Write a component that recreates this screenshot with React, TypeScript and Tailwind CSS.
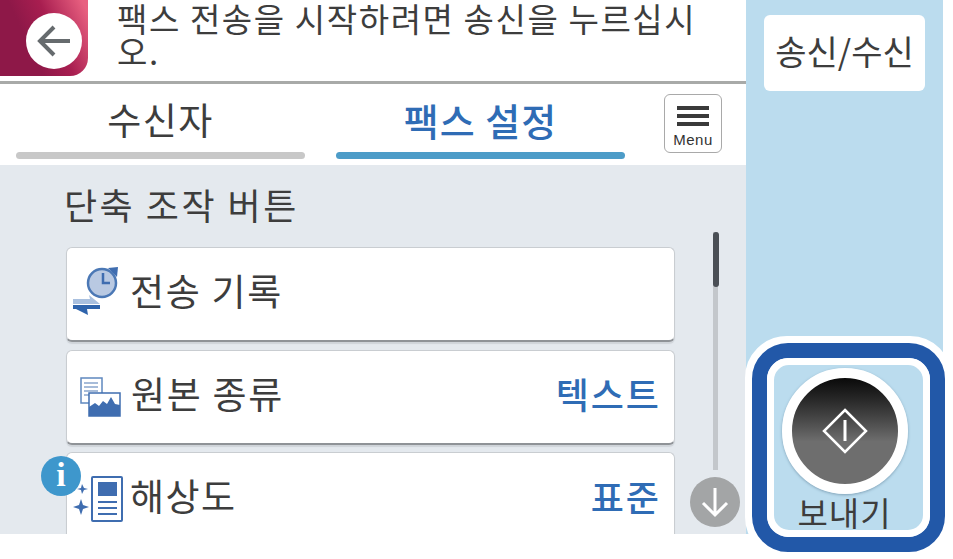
import React from 'react';

const font = { fontFamily: '"Noto Sans CJK KR", "Noto Sans", sans-serif' };

const HistoryIcon = () => (
  <svg width="46" height="50" viewBox="0 0 46 50">
    <circle cx="29" cy="16" r="14" fill="#b9c9e2" stroke="#4b78b5" strokeWidth="2.5" />
    <path d="M30 6v10h7" fill="none" stroke="#3f6db0" strokeWidth="2.5" />
    <path d="M35 1l10-1-1 10z" fill="#3f6db0" />
    <path d="M0 32h17l-1-4 11 9H0z" fill="#a9c0df" />
    <path d="M0 38h27v4H14l1 6-12-6H0z" fill="#2f64ac" />
  </svg>
);

const OriginalIcon = () => (
  <svg width="41" height="40" viewBox="0 0 41 40">
    <rect x="1" y="1" width="21" height="25" fill="#fff" stroke="#5f88bf" strokeWidth="1.5" />
    <path d="M4 6h14M4 10h14M4 14h14M4 18h6" stroke="#8aa6cd" strokeWidth="1.5" />
    <rect x="9" y="16" width="31" height="23" fill="#fff" stroke="#3f6db0" strokeWidth="1.5" />
    <path d="M9 39V30l6-4 4 3 4-5 4 3 4-7 4 7 5 1v11z" fill="#3f6db0" />
  </svg>
);

const ResolutionIcon = () => (
  <svg width="50" height="46" viewBox="0 0 50 46">
    <path d="M8 23l2 6 6 2-6 2-2 6-2-6-6-2 6-2z" fill="#3f6db0" />
    <path d="M9 8l2 4 4 1-4 1-2 4-1-4-4-1 4-1z" fill="#3f6db0" />
    <rect x="19" y="1" width="30" height="44" rx="1" fill="#fff" stroke="#3f6db0" strokeWidth="2" />
    <rect x="25" y="6" width="19" height="14" fill="#3f6db0" />
    <path d="M25 26h19M25 32h19M25 38h19" stroke="#3f6db0" strokeWidth="2" />
  </svg>
);

const Row = ({ icon, label, value, iconClass, track }: { icon: React.ReactNode; label: string; value?: string; iconClass: string; track: string }) => (
  <div className="flex h-[95px] shrink-0 items-center rounded-md border border-b-2 border-[#c9cdd1] border-b-[#8f9397] bg-white pb-[7px] shadow-[0_2px_1px_#cfd4d9]">
    <div className={iconClass}>{icon}</div>
    <span className={`text-[37px] leading-none text-[#3d3d3d] ${track}`}>{label}</span>
    {value && <span className="ml-auto mr-[13px] text-[36px] font-medium leading-none tracking-[2px] text-[#2f6cb5]">{value}</span>}
  </div>
);

export default function App() {
  return (
    <div className="relative flex h-[559px] w-[953px] items-start overflow-hidden bg-white" style={font}>
      <div className="flex h-[534px] w-[746px] shrink-0 flex-col">
        {/* header */}
        <div className="flex h-[84px] shrink-0 border-b-[3px] border-[#a8aaa8]">
          <div className="flex h-[76px] w-[88px] shrink-0 items-center justify-end rounded-br-[18px] bg-[linear-gradient(65deg,#8e1848_35%,#a81e50_60%,#e86080_95%)] pr-[6px] pt-[5px]">
            <div className="flex h-[56px] w-[56px] items-center justify-center rounded-full bg-white">
              <svg width="34" height="32" viewBox="0 0 34 32" fill="none" stroke="#666b6e" strokeWidth="4">
                <path d="M2 16h31M17 2L3 16l14 14" />
              </svg>
            </div>
          </div>
          <p className="ml-[29px] mt-[2px] w-[590px] text-[33px] leading-[33px] tracking-[1.6px] text-[#3d3d3d]">
            팩스 전송을 시작하려면 송신을 누르십시오.
          </p>
        </div>

        {/* tabs */}
        <div className="relative flex h-[81px] shrink-0 bg-white pl-[16px]">
          <div className="flex w-[289px] flex-col items-center">
            <span className="mt-[12px] text-[37px] leading-[47px] tracking-[1.5px] text-[#3d3d3d]">수신자</span>
            <div className="mt-[9px] h-[7px] w-full rounded-sm bg-[#c8c8c8]" />
          </div>
          <div className="ml-[31px] flex w-[289px] flex-col items-center">
            <span className="mt-[12px] text-[38px] font-medium leading-[47px] tracking-[1px] text-[#2f6cb5]">팩스 설정</span>
            <div className="mt-[9px] h-[7px] w-full rounded-sm bg-[#4d9cc8]" />
          </div>
          <div className="ml-[39px] mt-[10px] flex h-[59px] w-[58px] flex-col items-center rounded-md border border-[#a9a9a9] pt-[11px]">
            <div className="h-[4px] w-[32px] bg-[#3a3a3a]" />
            <div className="mt-[4px] h-[4px] w-[32px] bg-[#3a3a3a]" />
            <div className="mt-[4px] h-[4px] w-[32px] bg-[#3a3a3a]" />
            <span className="mt-[5px] text-[15px] leading-[18px] tracking-[0.5px] text-[#333]" style={{ fontFamily: '"Liberation Sans", sans-serif' }}>Menu</span>
          </div>
        </div>

        {/* list */}
        <div className="relative flex min-h-0 flex-1 overflow-hidden bg-[#e4e9ee]">
          <div className="ml-[66px] w-[609px] shrink-0">
            <div className="ml-[-2px] mt-[15px] h-[48px] text-[36px] leading-[48px] tracking-[2.5px] text-[#3d3d3d]">단축 조작 버튼</div>
            <div className="mt-[19px] flex flex-col gap-[7.5px]">
              <Row icon={<HistoryIcon />} iconClass="ml-[6px] mr-[11px] mt-[3px]" track="tracking-[1.7px]" label="전송 기록" />
              <Row icon={<OriginalIcon />} iconClass="ml-[13px] mr-[10px] mt-[8px]" track="tracking-[1.7px]" label="원본 종류" value="텍스트" />
              <Row icon={<ResolutionIcon />} iconClass="ml-[6px] mr-[7px] mt-[6px]" track="tracking-[1.5px]" label="해상도" value="표준" />
            </div>
          </div>
          <div className="ml-[15px] flex w-[50px] flex-col items-center">
            <div className="relative mt-[67px] h-[238px] w-[5px] bg-[#c3c7cb]">
              <div className="absolute left-0 top-0 h-[55px] w-[6px] rounded-sm bg-[#4a4f55]" />
            </div>
            <div className="mt-[7px] flex h-[50px] w-[50px] items-center justify-center rounded-full bg-[#a3a5a6]">
              <svg width="30" height="32" viewBox="0 0 30 32" fill="none" stroke="#fff" strokeWidth="3">
                <path d="M15 2v27M3 17l12 12 12-12" />
              </svg>
            </div>
          </div>
          {/* info badge */}
          <div className="absolute left-[41px] top-[291px] flex h-[40px] w-[40px] items-center justify-center rounded-full bg-[#3e97cc] pb-[2px] text-[34px] font-bold leading-none text-white" style={{ fontFamily: '"Liberation Serif", serif' }}>
            i
          </div>
        </div>
      </div>

      {/* side panel */}
      <div className="relative flex h-[534px] w-[197px] shrink-0 flex-col items-center bg-[#bbdcee]">
        <div className="mt-[15px] flex h-[76px] w-[161px] items-center justify-center rounded-md bg-white pb-1 text-[34px] leading-none text-[#3d3d3d]">
          송신/수신
        </div>
        <div className="absolute left-[-1px] top-[336px] rounded-[42px] border-[7px] border-white bg-white">
          <div className="rounded-[36px] border-[15px] border-[#2258a8]">
            <div className="flex h-[179px] w-[163px] flex-col items-center rounded-[22px] border-[7px] border-white bg-[#bbdcee] pr-[8px] pt-[3px]">
              <div className="flex h-[126px] w-[126px] shrink-0 items-center justify-center rounded-full border-[10px] border-white bg-gradient-to-b from-[#0a0a0a] to-[#6e6e6e] to-60% shadow-[0_1px_3px_#7fa0b5]">
                <svg width="46" height="46" viewBox="0 0 46 46" fill="none" stroke="#fff" strokeWidth="2.5">
                  <path d="M23 2l21 21-21 21L2 23z" />
                  <path d="M23 12v21" strokeWidth="3" />
                </svg>
              </div>
              <span className="mt-[-1px] text-[33px] leading-[38px] tracking-[1px] text-[#3d3d3d]">보내기</span>
            </div>
          </div>
        </div>
      </div>
    </div>
  );
}
